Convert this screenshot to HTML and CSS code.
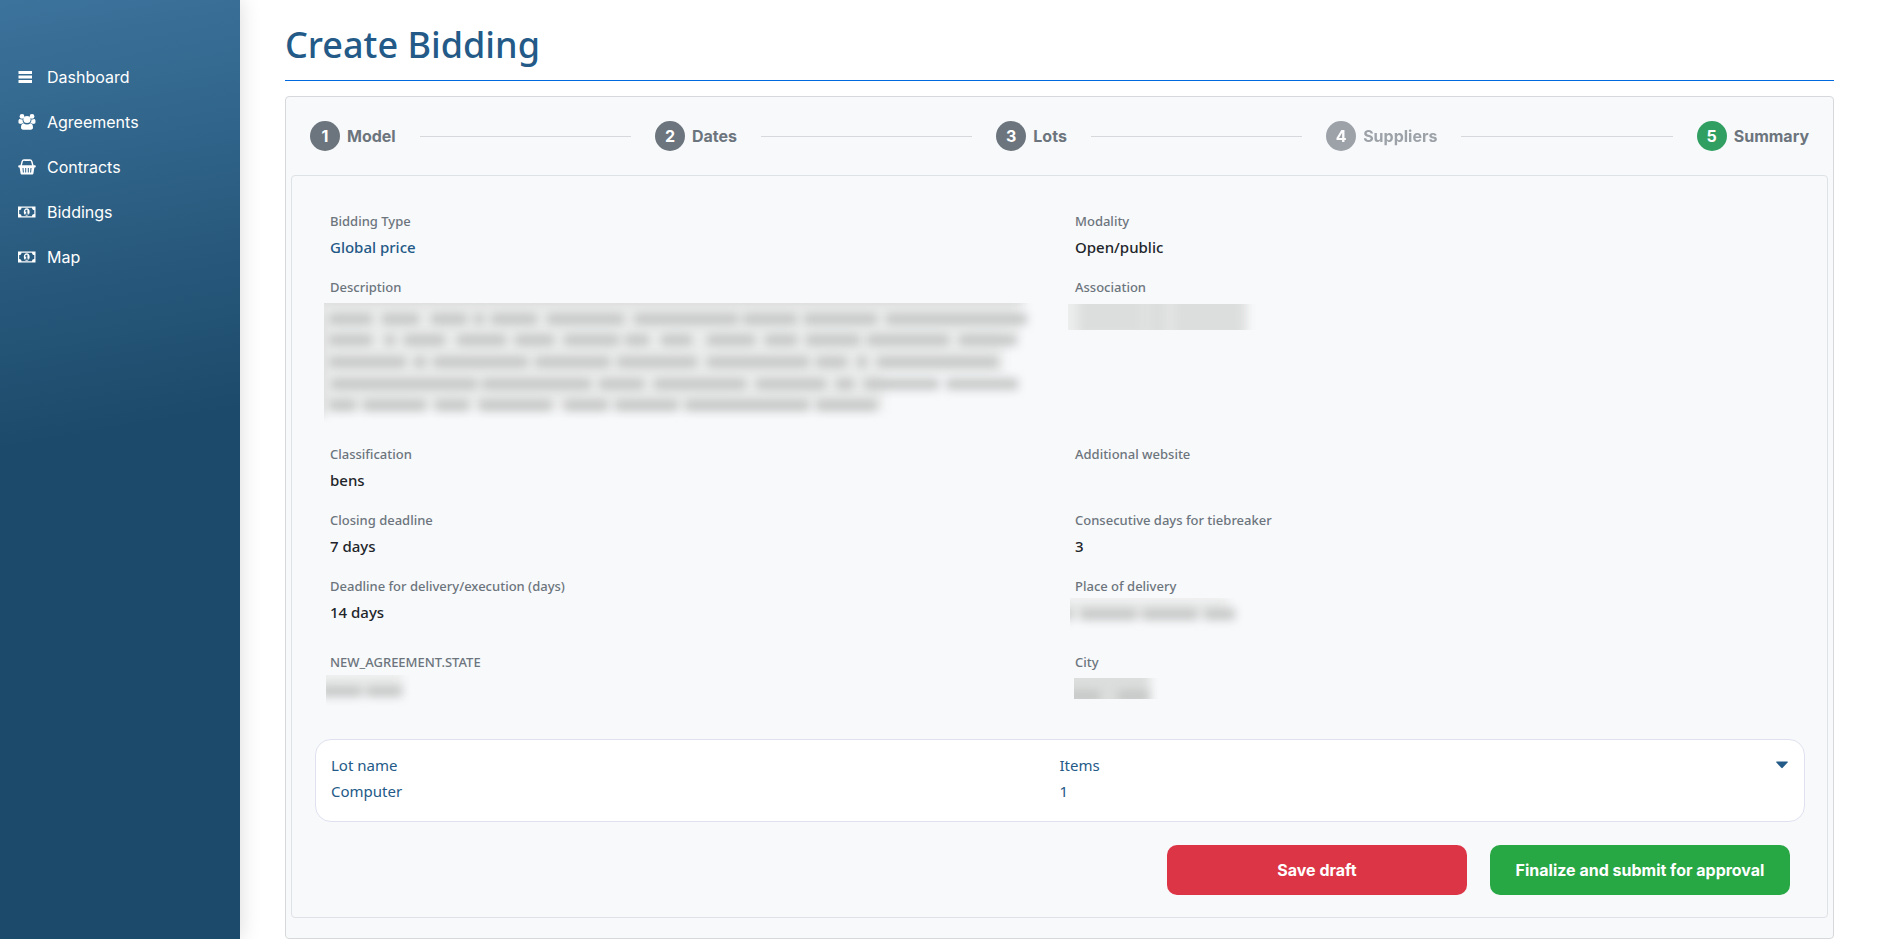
FILE: index.html
```html
<!DOCTYPE html>
<html lang="en">
<head>
<meta charset="utf-8">
<meta name="viewport" content="width=device-width, initial-scale=1">
<title>Create Bidding</title>
<link rel="stylesheet" href="styles.css">
</head>
<body>
<div class="app">
  <nav class="sidebar" aria-label="Main">
    <a class="nav-link" href="#"><svg class="nav-icon" viewBox="0 0 18 16" aria-hidden="true"><path d="M.5 2h13.500v3H.5zM.5 6.500h13.500v3H.5zM.5 11h13.500v3H.5z"/></svg>Dashboard</a>
    <a class="nav-link" href="#"><svg class="nav-icon" viewBox="0 0 18 16" aria-hidden="true"><circle cx="4" cy="2.400" r="2.400"/><circle cx="14" cy="2.400" r="2.400"/><path d="M1 9.500C.2 9 .2 5 1.600 5c1.200.4 2 .6 3 .4C4.500 7.500 5 8.300 5.800 9c-1.200 0-2 .3-2.600 1zM17 9.500c.8-.5.8-4.500-.6-4.500-1.200.4-2 .6-3 .4.100 2.100-.4 2.900-1.200 3.600 1.200 0 2 .3 2.600 1z"/><circle cx="9" cy="5.500" r="3.600"/><path d="M5.400 9.200c2.200 1.700 5 1.700 7.200 0 1.800.3 2.400 2 2.400 4.400 0 1.300-.8 2.100-2.200 2.100H5.200C3.800 15.700 3 14.900 3 13.600c0-2.400.6-4.100 2.400-4.400z"/></svg>Agreements</a>
    <a class="nav-link" href="#"><svg class="nav-icon" viewBox="0 0 18 16" aria-hidden="true"><path fill-rule="evenodd" d="M1.300 6.300h15.400c1.400 0 1.400 2.300 0 2.300h-.3l-1 6c-.1.600-.6 1-1.200 1H3.800c-.6 0-1.100-.4-1.200-1l-1-6h-.3c-1.400 0-1.400-2.300 0-2.300zM4.500 9l.4 4.500h1L5.500 9zM7.200 9v4.500h1V9zM9.800 9v4.500h1V9zM12.500 9l-.4 4.500h1l.4-4.500z"/><path class="handle" d="M3 7l1.200-4.500Q4.600 1 6 1h6q1.400 0 1.800 1.500L15 7M6.500 1.400h5"/></svg>Contracts</a>
    <a class="nav-link" href="#"><svg class="nav-icon" viewBox="0 0 18 16" aria-hidden="true"><path fill-rule="evenodd" d="M0 2.500h17.500v11H0zM3.500 3.700c0 1.400-1 2.300-2.300 2.300v4c1.300 0 2.300.9 2.300 2.300H14c0-1.400 1-2.300 2.300-2.300V6C15 6 14 5.100 14 3.700zM8.750 4.300c3.900 0 3.900 7.400 0 7.400s-3.900-7.400 0-7.400zM8.300 5.800L6.900 7l.6.700.7-.5v2.600H7v.9h3.500v-.9H9.400v-4z"/></svg>Biddings</a>
    <a class="nav-link" href="#"><svg class="nav-icon" viewBox="0 0 18 16" aria-hidden="true"><path fill-rule="evenodd" d="M0 2.500h17.500v11H0zM3.500 3.700c0 1.400-1 2.300-2.300 2.300v4c1.300 0 2.300.9 2.300 2.300H14c0-1.400 1-2.300 2.300-2.300V6C15 6 14 5.100 14 3.700zM8.750 4.300c3.900 0 3.900 7.400 0 7.400s-3.900-7.400 0-7.400zM8.300 5.800L6.900 7l.6.700.7-.5v2.600H7v.9h3.500v-.9H9.400v-4z"/></svg>Map</a>
  </nav>

  <main class="main">
    <h1 class="title">Create Bidding</h1>
    <div class="card">
      <ol class="steps">
        <li class="step"><span class="dot">1</span>Model</li>
        <li class="line" role="presentation"></li>
        <li class="step"><span class="dot">2</span>Dates</li>
        <li class="line" role="presentation"></li>
        <li class="step"><span class="dot">3</span>Lots</li>
        <li class="line" role="presentation"></li>
        <li class="step disabled"><span class="dot">4</span>Suppliers</li>
        <li class="line" role="presentation"></li>
        <li class="step current" aria-current="step"><span class="dot">5</span>Summary</li>
      </ol>

      <section class="panel">
        <dl class="fields">
          <div class="field"><dt>Bidding Type</dt><dd class="accent">Global price</dd></div>
          <div class="field"><dt>Modality</dt><dd>Open/public</dd></div>
          <div class="field"><dt>Description</dt><dd>
            <svg class="redacted redacted-text" width="715" height="119" viewBox="0 0 715 119" role="img" aria-label="Hidden description">
              <path class="haze" d="M-20 8H695M-20 48H680M-20 84H560"/>
              <path class="smudge light" d="M-10 -4H700M-6 10V114"/>
              <path class="smudge" d="M5 16H48M58 16H95M107 16H143M150 16H160M167 16H213M223 16H300M310 16H414M419 16H473M480 16H553M562 16H703"/>
              <path class="smudge" d="M5 37H48M61 37H71M80 37H121M133 37H182M191 37H230M240 37H295M301 37H325M337 37H368M383 37H431M441 37H473M482 37H536M543 37H625M635 37H693"/>
              <path class="smudge" d="M5 59H82M90 59H102M109 59H204M211 59H286M293 59H373M383 59H485M492 59H523M533 59H543M553 59H674"/>
              <path class="smudge" d="M7 81H153M158 81H267M275 81H320M330 81H422M432 81H502M512 81H530M540 81H615M622 81H694"/>
              <path class="smudge" d="M5 102H32M39 102H102M111 102H145M155 102H228M240 102H284M291 102H354M361 102H485M492 102H553"/>
            </svg></dd></div>
          <div class="field"><dt>Association</dt><dd>
            <svg class="redacted redacted-name" width="196" height="26" viewBox="0 0 196 26" role="img" aria-label="Hidden association"><path class="haze" d="M-20 10H180"/><path class="smudge wide" d="M10 10H76M78 12H100M104 12H176"/></svg></dd></div>
          <div class="field"><dt>Classification</dt><dd>bens</dd></div>
          <div class="field"><dt>Additional website</dt><dd></dd></div>
          <div class="field"><dt>Closing deadline</dt><dd>7 days</dd></div>
          <div class="field"><dt>Consecutive days for tiebreaker</dt><dd>3</dd></div>
          <div class="field"><dt>Deadline for delivery/execution (days)</dt><dd>14 days</dd></div>
          <div class="field"><dt>Place of delivery</dt><dd>
            <svg class="redacted redacted-place" width="178" height="34" viewBox="0 0 178 34" role="img" aria-label="Hidden place"><path class="haze thin" d="M-8 8H158"/><path class="smudge" d="M-8 16H3M10 16H67M72 16H128M134 16H165"/></svg></dd></div>
          <div class="field spaced"><dt>NEW_AGREEMENT.STATE</dt><dd>
            <svg class="redacted redacted-state" width="92" height="35" viewBox="0 0 92 35" role="img" aria-label="Hidden state"><path class="haze thin" d="M-8 6H76"/><path class="smudge" d="M-6 16H36M40 16H76"/></svg></dd></div>
          <div class="field spaced"><dt>City</dt><dd>
            <svg class="redacted redacted-city" width="92" height="21" viewBox="0 0 92 21" role="img" aria-label="Hidden city"><path class="smudge wide" d="M-10 10H76"/><path class="smudge" d="M-10 18H26M44 18H74"/></svg></dd></div>
        </dl>

        <div class="lot">
          <table class="lot-table">
            <thead><tr><th scope="col">Lot name</th><th scope="col">Items</th></tr></thead>
            <tbody><tr><td>Computer</td><td>1</td></tr></tbody>
          </table>
          <button class="toggle" type="button" aria-label="Expand lot"><svg width="12" height="8" viewBox="0 0 12 8" aria-hidden="true"><path d="M.6.500h10.800q.7.300.2 1L6.700 6.800q-.7.700-1.400 0L.4 1.500Q-.1.800.6.500z"/></svg></button>
        </div>

        <div class="actions">
          <button class="button danger" type="button">Save draft</button>
          <button class="button success" type="button">Finalize and submit for approval</button>
        </div>
      </section>
    </div>
  </main>
</div>
</body>
</html>
```

FILE: styles.css
```css
* { box-sizing: border-box; }

body {
  margin: 0;
  background: #fff;
  color: #212529;
  font: 500 15px/24px "Noto Sans", "Open Sans", sans-serif;
}

.app { display: flex; min-height: 100vh; }

.sidebar {
  flex: 0 0 240px;
  display: flex;
  flex-direction: column;
  gap: 21px;
  padding: 65px 18px;
  background: linear-gradient(170deg, #3c739c 0%, #1c4a6a 46%);
  box-shadow: 0 0 20px rgba(0, 0, 0, .15);
}

.nav-link {
  display: flex;
  align-items: center;
  gap: 11px;
  color: #fff;
  font: 400 16px/24px Inter, sans-serif;
  text-decoration: none;
}

.nav-icon { width: 18px; height: 16px; fill: #fff; }
.handle { fill: none; stroke: #fff; stroke-width: 1.4; }

.main { flex: 1; min-width: 0; padding: 16px 45px 0; }

.title {
  margin: 0 0 15px;
  padding-bottom: 7px;
  border-bottom: 1px solid #0069e0;
  color: #235a87;
  font-weight: 500;
  font-size: 36px;
  line-height: 57px;
}

.card {
  padding: 0 5px 20px;
  border: 1px solid #d6d8db;
  border-radius: 4px;
  background: #f8f9fb;
}

.steps {
  display: flex;
  align-items: center;
  gap: 24px;
  margin: 0;
  padding: 24px 19px;
  list-style: none;
}

.step {
  display: flex;
  align-items: center;
  gap: 7px;
  color: #6c757d;
  font: 700 16px/30px Inter, sans-serif;
}

.dot {
  width: 30px;
  height: 30px;
  border-radius: 50%;
  background: #6c757d;
  color: #fff;
  text-align: center;
}

.disabled { opacity: .65; }
.current .dot { background: #319f62; }
.line { flex: 1; height: 1px; background: #d6d8db; }

.panel {
  padding: 33px 22px 22px 23px;
  border: 1px solid #dee2e6;
  border-radius: 4px;
}

.fields {
  display: grid;
  grid-template-columns: 1fr 1fr;
  row-gap: 12px;
  margin: 0;
}

.field { min-height: 54px; padding-left: 15px; }
.field dt { color: #6c757d; font-size: 13px; line-height: 24px; }
.field dd { min-height: 28px; margin: 0; line-height: 28px; }
.field .accent { color: #235a87; }
.spaced { margin-top: 10px; }

.redacted { display: block; max-width: 100%; overflow: hidden; }
.redacted-text { margin: 4px 0 8px -6px; }
.redacted-name { margin: 5px 0 0 -7px; }
.redacted-place { margin: 0 0 -4px -5px; }
.redacted-state { margin: 1px 0 0 -4px; }
.redacted-city { margin: 4px 0 0 -1px; }

.smudge, .haze { fill: none; filter: blur(5px); }
.smudge { stroke: #c4c6c5; stroke-width: 11; }
.light { stroke: #d8d9d9; }
.wide { stroke: #dcdedd; stroke-width: 44; }
.haze { stroke: #eceded; stroke-width: 46; }
.thin { stroke-width: 20; }

.lot {
  display: flex;
  align-items: flex-start;
  margin-top: 29px;
  padding: 12px 16px 17px 15px;
  border: 1px solid #dfe1f0;
  border-radius: 16px;
  background: #fff;
}

.lot-table {
  flex: 1;
  table-layout: fixed;
  border-collapse: collapse;
  color: #235a87;
  line-height: 26px;
  text-align: left;
}

.lot-table th, .lot-table td { width: 50%; padding: 0; font-weight: 400; }

.toggle {
  display: flex;
  align-items: center;
  height: 26px;
  margin-left: -12px;
  padding: 0;
  border: 0;
  background: none;
  fill: #235a87;
}

.actions {
  display: flex;
  justify-content: flex-end;
  gap: 23px;
  margin-top: 23px;
  padding-right: 15px;
}

.button {
  width: 300px;
  height: 50px;
  border: 0;
  border-radius: 10px;
  color: #fff;
  font: 700 16px/24px Inter, sans-serif;
}

.danger { background: #dc3545; }
.success { background: #28a745; }
```
